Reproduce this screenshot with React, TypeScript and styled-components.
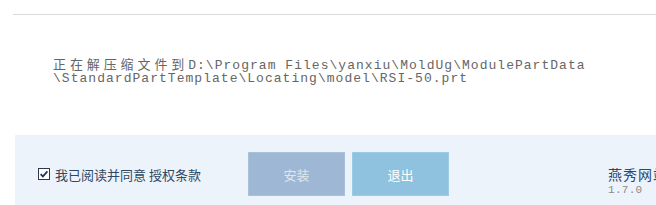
import styled, { createGlobalStyle } from 'styled-components';

const GlobalStyle = createGlobalStyle`
	html, body {
		margin: 0;
		padding: 0;
		background: #ffffff;
	}
	body {
		font-family: "Noto Sans CJK SC", "Noto Sans", sans-serif;
	}
`;

const Window = styled.div`
	width: 656px;
	height: 205px;
	overflow: hidden;
	display: flex;
	flex-direction: column;
	background: #ffffff;
`;

const TopRule = styled.div`
	margin: 14px 0 0 13px;
	height: 1px;
	background: #d9d9d9;
	flex: none;
`;

const Message = styled.div`
	flex: 1;
	padding: 43px 0 0 53px;
	font-family: "Liberation Mono", "Noto Sans CJK SC", monospace;
	font-size: 13px;
	line-height: 12.5px;
	letter-spacing: 1.03px;
	color: #666666;
	white-space: pre;
`;

const Cjk = styled.span`
	font-family: "Noto Sans CJK SC", sans-serif;
	font-size: 13px;
	letter-spacing: 3.9px;
`;

const Footer = styled.div`
	flex: none;
	height: 70px;
	margin-left: 15px;
	background: #edf3fa;
	display: flex;
	align-items: flex-start;
	padding: 17px 0 0 23px;
	box-sizing: border-box;
	white-space: nowrap;
	overflow: hidden;
`;

const Agree = styled.label`
	width: 210px;
	height: 44px;
	display: flex;
	align-items: center;
	gap: 5px;
	font-size: 13px;
	color: #2d4865;
	flex: none;
`;

const Buttons = styled.div`
	display: flex;
	gap: 7px;
	flex: none;
`;

const Button = styled.button<{ $tone: 'muted' | 'light' }>`
	width: 97px;
	height: 44px;
	border: 1px solid ${(p) => (p.$tone === 'muted' ? '#a8c0d9' : '#9ccbe5')};
	background: ${(p) => (p.$tone === 'muted' ? '#9db7d4' : '#8ec2df')};
	color: ${(p) => (p.$tone === 'muted' ? '#dfe7f0' : '#ffffff')};
	font-family: "Noto Sans CJK SC", sans-serif;
	font-size: 13px;
	padding: 0;
	cursor: pointer;
`;

const Brand = styled.div`
	margin: 14px 0 0 159px;
	display: flex;
	flex-direction: column;
	flex: 1;
	min-width: 0;
	overflow: hidden;
`;

const BrandName = styled.div`
	font-size: 14px;
	line-height: 16px;
	color: #2a4770;
	letter-spacing: 1px;
	overflow: hidden;
`;

const Version = styled.div`
	font-family: "Liberation Mono", monospace;
	font-size: 11px;
	line-height: 16px;
	letter-spacing: 0.3px;
	color: #8a8a8a;
`;

const CheckBox = () => (
	<svg width="12" height="12" viewBox="0 0 12 12">
		<rect x="0.5" y="0.5" width="11" height="11" fill="#ffffff" stroke="#2b3a4e" />
		<path d="M2.6 6.1 L4.9 8.4 L9.4 3.4" fill="none" stroke="#1f3556" strokeWidth="1.7" />
	</svg>
);

export default function App() {
	return (
		<>
			<GlobalStyle />
			<Window>
				<TopRule />
				<Message>
					<Cjk>正在解压缩文件到</Cjk>
					{'D:\\Program Files\\yanxiu\\MoldUg\\ModulePartData\n\\StandardPartTemplate\\Locating\\model\\RSI-50.prt'}
				</Message>
				<Footer>
					<Agree>
						<CheckBox />
						<span>我已阅读并同意 授权条款</span>
					</Agree>
					<Buttons>
						<Button $tone="muted">安装</Button>
						<Button $tone="light">退出</Button>
					</Buttons>
					<Brand>
						<BrandName>燕秀网站</BrandName>
						<Version>1.7.0</Version>
					</Brand>
				</Footer>
			</Window>
		</>
	);
}
